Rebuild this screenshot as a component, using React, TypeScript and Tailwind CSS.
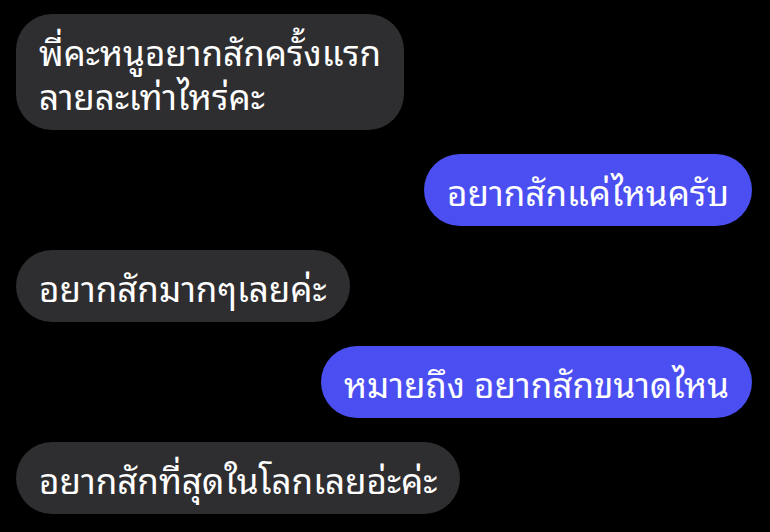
import React from 'react';

const FONT =
  "font-['Noto_Sans_Thai_Looped','Loma','Garuda','Noto_Sans_Thai','Noto_Sans','DejaVu_Sans',sans-serif]";

function Bubble({ text, me }: { text: React.ReactNode; me?: boolean }) {
  return (
    <div className={me ? 'flex justify-end' : 'flex justify-start'}>
      <div
        className={
          'rounded-[36px] px-[23px] py-[14px] text-[35px] leading-[44px] text-white ' +
          (me ? 'bg-[#4b4ff2]' : 'bg-[#2e2e30]')
        }
      >
        {text}
      </div>
    </div>
  );
}

export default function App() {
  return (
    <div className={`h-[532px] w-[770px] overflow-hidden bg-black pl-4 pr-[18px] pt-[14px] ${FONT}`}>
      <div className="flex flex-col gap-6">
        <Bubble
          text={
            <>
              พี่คะหนูอยากสักครั้งแรก
              <br />
              ลายละเท่าไหร่คะ
            </>
          }
        />
        <Bubble me text="อยากสักแค่ไหนครับ" />
        <Bubble text="อยากสักมากๆเลยค่ะ" />
        <Bubble me text="หมายถึง อยากสักขนาดไหน" />
        <Bubble text="อยากสักที่สุดในโลกเลยอ่ะค่ะ" />
      </div>
    </div>
  );
}
